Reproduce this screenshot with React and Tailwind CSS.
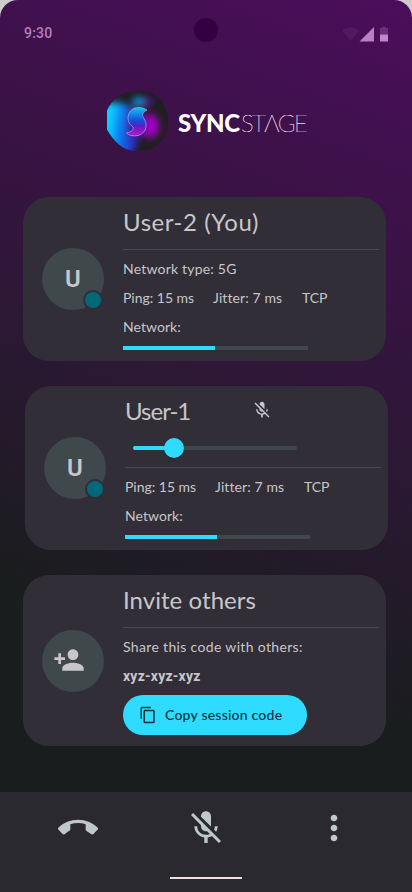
import React from "react";
import {
  MdMicOff,
  MdCallEnd,
  MdMoreVert,
  MdPersonAdd,
  MdContentCopy,
} from "react-icons/md";

function StatusBar() {
  return (
    <div className="relative flex h-[64px] items-center justify-between pl-6 pr-[22px]">
      <span className="mt-px font-[Roboto] text-[14px] font-medium leading-5 tracking-[0.2px] text-[#b47fbe]">
        9:30
      </span>
      <span className="absolute left-[194px] top-[18px] size-6 rounded-full bg-[#35003f]" />
      <svg className="mt-[3px] h-[16px] w-[48px]" viewBox="0 0 48 16">
        <path d="M0 4.4C4.8.2 12.6.2 17.4 4.4L8.7 14.8z" fill="#4f1a61" />
        <path d="M17.5 15.5L32 1v14.500z" fill="#b97fc6" />
        <path d="M38 2h2.300V.7h3.400V2H46v6.500h-8z" fill="#6d2c7c" />
        <path d="M38 8.500h8V15.500h-8z" fill="#c184cd" />
      </svg>
    </div>
  );
}

function LogoMark() {
  return (
    <svg className="h-[60px] w-[61px]" viewBox="0 0 61 60">
      <defs>
        <clipPath id="blob">
          <path d="M0 19.500C4.500 8.500 15.500 0 29 0h5C49.500 0 61 13.500 61 30S49.500 60 34 60h-5C15.500 60 6.500 50 0 38.500z" />
        </clipPath>
        <filter id="soft" x="-60%" y="-60%" width="220%" height="220%">
          <feGaussianBlur stdDeviation="3.500" />
        </filter>
        <linearGradient id="left" x1="0" x2="1" y1="0.4" y2="0.6">
          <stop offset="0.28" stopColor="#08d5ff" />
          <stop offset="0.6" stopColor="#0871ef" />
          <stop offset="1" stopColor="#3a16b6" />
        </linearGradient>
        <linearGradient id="ess" x1="0" x2="0" y1="0" y2="1">
          <stop offset="0" stopColor="#10c4f4" />
          <stop offset="0.45" stopColor="#1550dc" />
          <stop offset="0.65" stopColor="#5a1fc0" />
          <stop offset="1" stopColor="#c012cc" />
        </linearGradient>
      </defs>
      <g clipPath="url(#blob)">
        <rect width="61" height="60" fill="#211e20" />
        <g filter="url(#soft)">
          <path d="M-12 14Q14 8 25 17L32 44 25 68H-12z" fill="url(#left)" />
          <circle cx="31" cy="11" r="5.500" fill="#0b8de0" />
          <circle cx="41" cy="11" r="5" fill="#48188f" />
          <ellipse cx="44" cy="35" rx="8" ry="12" fill="#a003c2" />
          <path d="M20 22h18v24H20z" fill="#3814a4" />
        </g>
        <path
          d="M40 19C36 16.300 31.500 16 28 17C23 18.500 21 23 21 27C21 31 23 34 26 36C27 39 24.500 41 19.500 42C22 44.500 26 45.300 30 44.700C36 43.800 39 39 39 34.500C39 30.500 37.500 28 35.800 25.500C35 22.500 37 20.500 40 19z"
          fill="url(#ess)"
          stroke="#b9a8ee"
          strokeOpacity="0.75"
          strokeWidth="0.9"
        />
      </g>
    </svg>
  );
}

function Brand() {
  return (
    <div className="ml-[107px] mt-[27px] flex h-[60px] items-center">
      <LogoMark />
      <div className="ml-[10px] mt-[4px] flex items-center whitespace-nowrap font-[Lato] text-[24px] leading-6 text-white">
        <span className="w-[63px] font-black tracking-[-0.3px]">SYNC</span>
        <span className="font-thin tracking-[-1.6px] text-white [-webkit-text-stroke:0.2px_#ffffff]">
          STΛGE
        </span>
      </div>
    </div>
  );
}

function Avatar({ children, online }) {
  return (
    <div className="relative flex size-[62px] items-center justify-center rounded-full bg-[#3f484a] font-[Roboto] text-[24px] font-semibold text-[#c8c6ca]">
      {children}
      {online && (
        <span className="absolute left-[41px] top-[42px] size-5 rounded-full border-2 border-[#302d38] bg-[#006879]" />
      )}
    </div>
  );
}

function Card({ className, avatar, children }) {
  return (
    <section
      className={`flex w-[363px] items-center rounded-[26px] bg-[#312e38] pl-[19px] pr-[7px] ${className}`}
    >
      {avatar}
      <div className="ml-[19px] flex h-full flex-1 flex-col whitespace-nowrap text-[14px] leading-5 text-[#c8c6ca]">
        {children}
      </div>
    </section>
  );
}

function NetworkStats() {
  return (
    <>
      <div className="mt-[9px] flex">
        <span className="w-[90px] tracking-[-0.02px]">Ping: 15 ms</span>
        <span className="w-[89px] tracking-[0.1px]">Jitter: 7 ms</span>
        <span className="tracking-[-0.1px]">TCP</span>
      </div>
      <div className="mt-[9px] tracking-[0.05px]">Network:</div>
      <div className="mt-[9px] h-1 w-[185px] bg-[#3f484a]">
        <div className="h-1 w-[92px] bg-[#2fdcff]" />
      </div>
    </>
  );
}

function Rule({ className }) {
  return <div className={`h-px shrink-0 bg-[#454950] ${className}`} />;
}

export default function App() {
  return (
    <div className="h-[892px] w-[412px] overflow-hidden bg-[#cccccc]">
      <div className="flex h-full flex-col overflow-hidden rounded-t-[18px] bg-[linear-gradient(200deg,#4b0d5b_0%,#1a1d1e_70%)] font-[Lato,sans-serif]">
        <StatusBar />
        <Brand />

        <Card className="ml-[23px] mt-[46px] h-[164px]" avatar={<Avatar online>U</Avatar>}>
          <h2 className="mt-[9px] text-[24px] leading-8 tracking-[0.55px]">User-2 (You)</h2>
          <Rule className="mt-[11px]" />
          <div className="mt-[9px] tracking-[0.2px]">Network type: 5G</div>
          <NetworkStats />
        </Card>

        <Card className="ml-[25px] mt-[25px] h-[164px]" avatar={<Avatar online>U</Avatar>}>
          <div className="mt-[9px] flex h-8 items-center">
            <h2 className="w-[127px] text-[24px] leading-8 tracking-[-1px]">User-1</h2>
            <MdMicOff className="-mt-[3px] size-5" />
          </div>
          <div className="ml-2 mt-[11px] flex h-5 w-[164px] items-center">
            <div className="h-1 w-[32px] rounded-l-full bg-[#2fdcff]" />
            <div className="-ml-px size-5 rounded-full bg-[#2fdcff] shadow-sm" />
            <div className="h-1 flex-1 rounded-r-full bg-[#3f484a]" />
          </div>
          <Rule className="mt-[9px]" />
          <NetworkStats />
        </Card>

        <Card
          className="ml-[23px] mt-[25px] h-[171px]"
          avatar={
            <Avatar>
              <MdPersonAdd className="-ml-[8px] -mt-px size-8" />
            </Avatar>
          }
        >
          <h2 className="mt-[9px] text-[24px] leading-8 tracking-[0.05px]">Invite others</h2>
          <Rule className="mt-[11px]" />
          <div className="mt-[9px] tracking-[0.34px]">Share this code with others:</div>
          <div className="mt-[9px] font-[Roboto] font-bold tracking-[0.25px]">xyz-xyz-xyz</div>
          <button className="mt-[9px] flex h-10 w-[184px] items-center rounded-full bg-[#2fdcff] pl-4 font-medium text-[#00363f]">
            <MdContentCopy className="size-[18px]" />
            <span className="ml-2 tracking-[0.22px]">Copy session code</span>
          </button>
        </Card>

        <nav className="mt-[46px] flex h-[100px] flex-col items-center bg-[#2b2930]">
          <div className="mt-4 flex w-[296px] justify-between text-[#bfc8cb]">
            <MdCallEnd className="size-10" />
            <MdMicOff className="size-10" />
            <MdMoreVert className="size-10" />
          </div>
          <div className="mt-[29px] h-[2px] w-[72px] bg-[#f2dde1]" />
        </nav>
      </div>
    </div>
  );
}
